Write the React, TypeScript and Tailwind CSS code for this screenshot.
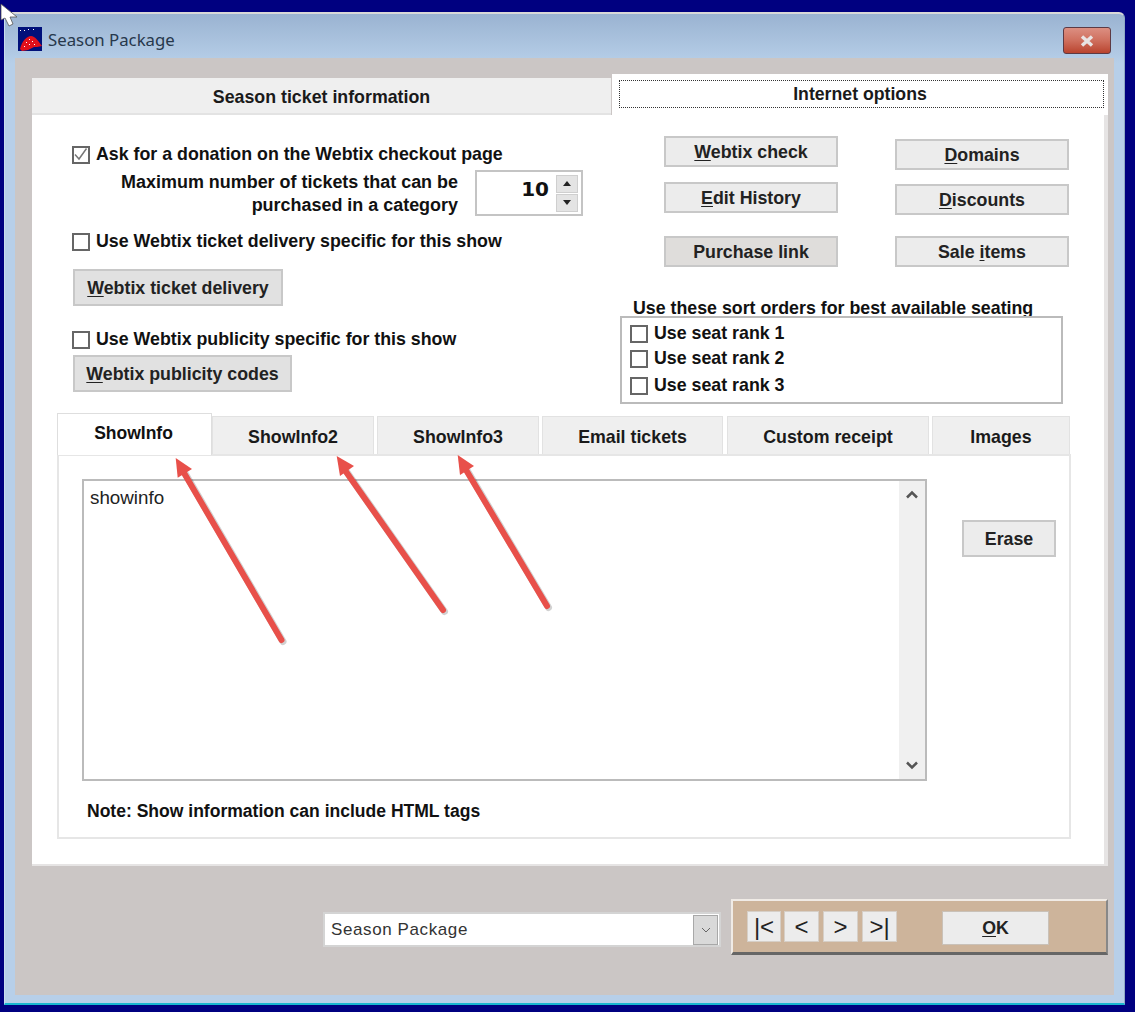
import React from 'react'

const FONT = "font-['Liberation_Sans',Arial,sans-serif]"

// underlined access key, like the old windows buttons
function Key({ children }: { children: React.ReactNode }) {
  return <span className="underline underline-offset-2">{children}</span>
}

function Check({ label, checked, className = '' }: { label: string; checked?: boolean; className?: string }) {
  return (
    <div className={`flex items-center h-[19px] ${className}`}>
      <div className="w-[18px] h-[18px] border-2 border-[#666] bg-white shrink-0 flex items-center justify-center">
        {checked && (
          <svg width="14" height="14" viewBox="0 0 14 14">
            <path d="M1 6.5 L5 11 L12.5 0.5" fill="none" stroke="#777" strokeWidth="1.5" />
          </svg>
        )}
      </div>
      <span className="ml-[6px] text-[17.8px] font-bold text-[#111] whitespace-nowrap">{label}</span>
    </div>
  )
}

function Btn({ children, className = '' }: { children: React.ReactNode; className?: string }) {
  return (
    <div className={`flex items-center justify-center pt-px border-2 border-[#c8c8c8] text-[17.8px] font-bold text-[#222] whitespace-nowrap ${className}`}>
      {children}
    </div>
  )
}

function InnerTab({ label, width }: { label: string; width: string }) {
  return (
    <div className={`h-[38px] ${width} bg-[#efefef] border border-b-0 border-[#e2e2e2] flex items-center justify-center pt-[3px] text-[17.8px] font-bold text-[#1a1a1a]`}>
      {label}
    </div>
  )
}

function Arrow({ tip, tail, head }: { tip: [number, number]; tail: [number, number]; head: string }) {
  return (
    <g>
      <line x1={tail[0] + 1.5} y1={tail[1] + 1.5} x2={tip[0] + 8} y2={tip[1] + 13} stroke="#000" strokeOpacity="0.18" strokeWidth="7" strokeLinecap="round" />
      <line x1={tail[0]} y1={tail[1]} x2={tip[0] + 6} y2={tip[1] + 11} stroke="#e8504a" strokeWidth="6" strokeLinecap="round" />
      <polygon points={head} fill="#e8504a" />
    </g>
  )
}

function NavBtn({ children, className = '' }: { children: React.ReactNode; className?: string }) {
  return (
    <div className={`h-[31px] bg-[#ececec] border border-[#d6cfc7] flex items-center justify-center text-[24px] text-[#222] ${className}`}>
      {children}
    </div>
  )
}

export default function App() {
  return (
    <div className={`relative w-[1135px] h-[1012px] overflow-hidden bg-[#000080] pt-[12px] pl-[4px] ${FONT}`}>
      <div className="w-[1121px] h-[993px] rounded-t-[6px] border-t-2 border-l border-r border-b-2 border-t-[#d8d8d8] border-l-[#c8dcec] border-r-[#8fa9c4] border-b-[#19b7d0] bg-gradient-to-b from-[#9ab3d1] to-[#b7cfe9] to-[5%] flex flex-col">
        {/* title bar */}
        <div className="h-[44px] shrink-0 flex items-start pl-[13px] pr-[13px] pt-[13px]">
          <svg width="24" height="24" viewBox="0 0 24 24" className="shrink-0">
            <rect width="24" height="24" fill="#00107a" />
            <path d="M2 22 C4 14 9 9 13 9 C17 9 21 15 24 19 L19 20 L16 20 L10 23 L4 24 Z" fill="#e0101c" />
            <path d="M8 15h1v1H8zM11 12h1v1h-1zM14 14h1v1h-1zM11 17h1v1h-1zM16 17h1v1h-1zM6 19h1v1H6z M2 3h1v1H2z M6 3h1v1H6z M10 2h1v1h-1z M15 2h1v1h-1z" fill="#fff" />
          </svg>
          <span className="ml-[6px] font-['Noto_Sans',sans-serif] text-[16.8px] leading-[26px] text-[#27384c]">Season Package</span>
          <div className="ml-auto w-[48px] h-[27px] rounded-[3px] border border-[#5d3a44] bg-gradient-to-b from-[#dc8f82] via-[#cf6f5e] to-[#b9432e] flex items-center justify-center">
            <svg width="16" height="12" viewBox="0 0 16 12">
              <path d="M3 1.5 L13 10.5 M13 1.5 L3 10.5" stroke="#e8e4e4" strokeWidth="3.4" fill="none" />
            </svg>
          </div>
        </div>

        {/* client area */}
        <div className="mx-[10px] w-[1099px] h-[937px] bg-[#cbc6c5] pl-[17px] pt-[16px]">
          {/* top tabs */}
          <div className="flex items-end h-[41px]">
            <div className="w-[579px] h-[37px] bg-[#efefef] border-b-2 border-[#e3e3e3] flex items-center justify-center pt-[4px] text-[17.8px] font-bold text-[#1a1a1a]">
              Season ticket information
            </div>
            <div className="ml-px w-[496px] h-[41px] bg-white pl-[7px] pt-[6px]">
              <div className="w-[485px] h-[28px] border border-dotted border-[#333] flex items-center justify-center pr-[3px] text-[17.7px] font-bold text-[#1a1a1a]">
                Internet options
              </div>
            </div>
          </div>

          {/* main panel */}
          <div className="w-[1076px] h-[751px] bg-white border-r-4 border-b-2 border-[#e6e4e4]">
            <div className="flex h-[298px]">
              {/* left column */}
              <div className="w-[588px] pl-[40px] pt-[30px]">
                <Check label="Ask for a donation on the Webtix checkout page" checked />
                <div className="flex mt-[6px]">
                  <div className="w-[386px] h-[46px] pt-px text-right text-[17.95px] leading-[23px] font-bold text-[#111] whitespace-nowrap">
                    <div>Maximum number of tickets that can be</div>
                    <div>purchased in a category</div>
                  </div>
                  <div className="ml-[17px] w-[108px] h-[46px] border-2 border-[#c4c4c4] flex items-center justify-end">
                    <span className="font-['DejaVu_Sans',sans-serif] text-[20px] font-bold text-[#111] mr-[7px] pb-[8px]">10</span>
                    <div className="mr-[3px] w-[22px] flex flex-col gap-px">
                      <div className="h-[18px] bg-[#e4e4e4] border border-[#cfcfcf] flex items-center justify-center">
                        <svg width="8" height="5" viewBox="0 0 8 5"><path d="M4 0 L8 5 H0 Z" fill="#222" /></svg>
                      </div>
                      <div className="h-[18px] bg-[#e4e4e4] border border-[#cfcfcf] flex items-center justify-center">
                        <svg width="8" height="5" viewBox="0 0 8 5"><path d="M0 0 H8 L4 5 Z" fill="#222" /></svg>
                      </div>
                    </div>
                  </div>
                </div>
                <Check label="Use Webtix ticket delivery specific for this show" className="mt-[16px]" />
                <Btn className="mt-[18px] ml-px w-[210px] h-[37px] bg-[#e1e1e1]"><span><Key>W</Key>ebtix ticket delivery</span></Btn>
                <Check label="Use Webtix publicity specific for this show" className="mt-[24px]" />
                <Btn className="mt-[6px] ml-px w-[219px] h-[37px] bg-[#e1e1e1]"><span><Key>W</Key>ebtix publicity codes</span></Btn>
              </div>

              {/* right column */}
              <div className="flex flex-col">
                <div className="flex">
                  <div className="ml-[44px] w-[174px] pt-[21px] flex flex-col">
                    <Btn className="h-[31px] bg-[#ececec]"><span><Key>W</Key>ebtix check</span></Btn>
                    <Btn className="h-[31px] mt-[15px] bg-[#ececec]"><span><Key>E</Key>dit History</span></Btn>
                    <Btn className="h-[31px] mt-[23px] bg-[#dfdddb]">Purchase link</Btn>
                  </div>
                  <div className="ml-[57px] w-[174px] pt-[24px] flex flex-col">
                    <Btn className="h-[31px] bg-[#ececec]"><span><Key>D</Key>omains</span></Btn>
                    <Btn className="h-[31px] mt-[14px] bg-[#ececec]"><span><Key>D</Key>iscounts</span></Btn>
                    <Btn className="h-[31px] mt-[21px] bg-[#ececec]"><span>Sale <Key>i</Key>tems</span></Btn>
                  </div>
                </div>
                <div className="mt-[31px] ml-[13px] h-[18px] pt-px leading-[18px] text-[17.8px] font-bold text-[#111] whitespace-nowrap">
                  Use these sort orders for best available seating
                </div>
                <div className="w-[443px] h-[88px] border-2 border-[#bbb] pl-[8px] pt-[6px]">
                  <Check label="Use seat rank 1" />
                  <Check label="Use seat rank 2" className="mt-[6px]" />
                  <Check label="Use seat rank 3" className="mt-[8px]" />
                </div>
              </div>
            </div>

            {/* inner tabs */}
            <div className="pl-[25px]">
              <div className="flex items-end h-[41px]">
                <div className="relative z-10 -mb-px w-[155px] h-[42px] bg-white border border-b-0 border-[#dedede] text-[17.5px] font-bold text-[#111] flex justify-center pt-[6px] pr-[2px]">
                  ShowInfo
                </div>
                <InnerTab label="ShowInfo2" width="w-[162px]" />
                <div className="w-[3px]" />
                <InnerTab label="ShowInfo3" width="w-[162px]" />
                <div className="w-[3px]" />
                <InnerTab label="Email tickets" width="w-[181px]" />
                <div className="w-[4px]" />
                <InnerTab label="Custom receipt" width="w-[202px]" />
                <div className="w-[3px]" />
                <InnerTab label="Images" width="w-[138px]" />
              </div>
              <div className="w-[1014px] h-[385px] border-2 border-[#e6e6e6] pl-[23px] pt-[23px]">
                <div className="flex">
                  <div className="w-[845px] h-[302px] border-2 border-[#bbb] flex">
                    <div className="flex-1 pl-[6px] pt-[5px] text-[18.8px] leading-[24px] text-[#222]">showinfo</div>
                    <div className="w-[26px] bg-[#f0f0f0] flex flex-col items-center justify-between py-[9px]">
                      <svg width="14" height="9" viewBox="0 0 14 9"><path d="M2 7.5 L7 2.5 L12 7.5" fill="none" stroke="#555" strokeWidth="2.5" /></svg>
                      <svg width="14" height="9" viewBox="0 0 14 9"><path d="M2 1.5 L7 6.5 L12 1.5" fill="none" stroke="#555" strokeWidth="2.5" /></svg>
                    </div>
                  </div>
                  <Btn className="ml-[35px] mt-[41px] w-[94px] h-[37px] bg-[#ececec]">Erase</Btn>
                </div>
                <div className="mt-[19px] pl-[5px] text-[17.55px] leading-[22px] font-bold text-[#111]">
                  Note: Show information can include HTML tags
                </div>
              </div>
            </div>
          </div>

          {/* bottom row */}
          <div className="flex items-start mt-[33px] pl-[291px]">
            <div className="mt-[13px] w-[398px] h-[35px] bg-white border-2 border-[#d4d4d4] flex items-center justify-between">
              <span className="pl-[6px] text-[17px] tracking-[0.6px] text-[#333]">Season Package</span>
              <div className="mr-px w-[25px] h-[30px] bg-[#d9d9d9] border border-[#a8a8a8] flex items-center justify-center">
                <svg width="10" height="6" viewBox="0 0 10 6"><path d="M1 1 L5 5 L9 1" fill="none" stroke="#666" strokeWidth="1" /></svg>
              </div>
            </div>
            <div className="ml-[10px] w-[377px] h-[56px] bg-[#cdb49b] border-t-2 border-l-2 border-t-[#f0ebe6] border-l-[#f0ebe6] border-b-[3px] border-r-[2px] border-b-[#666] border-r-[#888] pl-[14px] pt-[10px] flex items-start">
              <NavBtn className="w-[34px]">|&lt;</NavBtn>
              <NavBtn className="ml-[3px] w-[35px]">&lt;</NavBtn>
              <NavBtn className="ml-[4px] w-[35px]">&gt;</NavBtn>
              <NavBtn className="ml-[4px] w-[35px]">&gt;|</NavBtn>
              <div className="ml-[45px] w-[107px] h-[34px] bg-[#ececec] border border-[#c9c1b8] flex items-center justify-center text-[17.8px] font-bold text-[#222]">
                <span><Key>O</Key>K</span>
              </div>
            </div>
          </div>
        </div>
      </div>

      {/* red callout arrows over the tabs */}
      <svg className="absolute left-0 top-0 pointer-events-none" width="1135" height="1012">
        <Arrow tip={[175.7, 458]} tail={[281.5, 640]} head="175.7,458 192,469 177.7,477.7" />
        <Arrow tip={[336.7, 456]} tail={[443, 610]} head="336.7,456 354,466 340,476" />
        <Arrow tip={[457.7, 455]} tail={[547, 606]} head="457.7,455 474,466 460,475" />
      </svg>

      {/* mouse pointer */}
      <svg className="absolute left-0 top-0 pointer-events-none" width="20" height="28" viewBox="0 0 20 28">
        <path d="M1 4 L1 20 L5 18 L9 26 L13 24 L10 17 L17 17 Z" fill="#fff" stroke="#555" strokeWidth="0.8" />
      </svg>
    </div>
  )
}
